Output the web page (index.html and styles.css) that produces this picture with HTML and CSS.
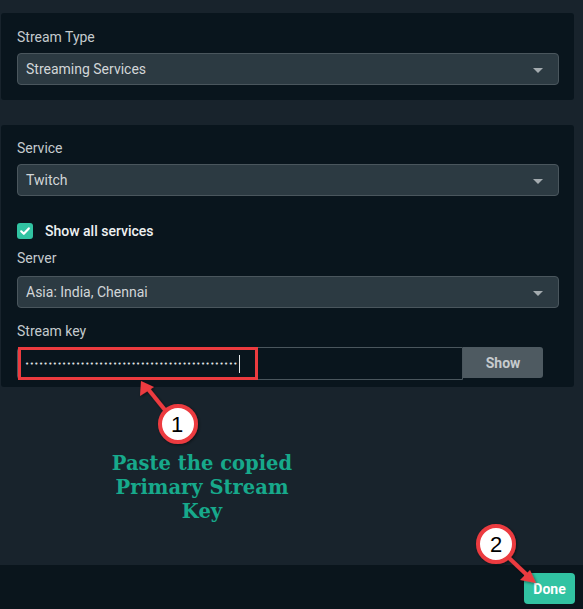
FILE: index.html
```html
<!DOCTYPE html>
<html lang="en">
  <head>
    <meta charset="UTF-8" />
    <title>Stream Settings</title>
    <link rel="stylesheet" href="styles.css">
  </head>
  <body>
    <div class="page">
      <div class="panel panel-type">
        <div class="label">Stream Type</div>
        <div class="select">Streaming Services<span class="caret"></span></div>
      </div>

      <div class="panel panel-service">
        <div class="label">Service</div>
        <div class="select">Twitch<span class="caret"></span></div>

        <div class="check-row">
          <span class="checkbox">
            <svg width="16" height="16" viewBox="0 0 16 16">
              <path d="M4.2 8.3 L6.8 10.8 L11.8 5.4" fill="none" stroke="#fff" stroke-width="2.2" stroke-linecap="round" stroke-linejoin="round" />
            </svg>
          </span>
          <span class="check-text">Show all services</span>
        </div>

        <div class="label label-server">Server</div>
        <div class="select">Asia: India, Chennai<span class="caret"></span></div>

        <div class="label label-key">Stream key</div>
        <div class="key-row">
          <div class="key-input"><span class="dots">••••••••••••••••••••••••••••••••••••••••••••••</span><span class="cursor"></span></div>
          <button class="show-btn">Show</button>
        </div>
      </div>

      <div class="spacer"></div>

      <div class="footer">
        <button class="done-btn">Done</button>
      </div>

      <svg class="notes" width="583" height="609" viewBox="0 0 583 609">
        <defs>
          <filter id="sh" x="-30%" y="-30%" width="160%" height="160%">
            <feDropShadow dx="1" dy="1" stdDeviation="1.5" flood-color="#000" flood-opacity="0.5" />
          </filter>
        </defs>
        <rect x="19.5" y="348.5" width="237" height="30" fill="none" stroke="#ec3b3f" stroke-width="3" />
        <g stroke="#ec3b3f" fill="#ec3b3f" filter="url(#sh)">
          <line x1="165" y1="410" x2="148" y2="389" stroke-width="4" />
          <polygon points="141,381 140,396 154,387" stroke="none" />
          <line x1="508" y1="557" x2="527" y2="575" stroke-width="4" />
          <polygon points="536,583 520,580 530,570" stroke="none" />
          <circle cx="178" cy="424" r="18" fill="#fff" stroke-width="4" />
          <circle cx="496" cy="544" r="18" fill="#fff" stroke-width="4" />
        </g>
        <text x="177" y="432" class="num">1</text>
        <text x="496" y="552" class="num">2</text>
      </svg>

      <div class="note-text">Paste the copied<br />Primary Stream<br />Key</div>
    </div>
  </body>
</html>
```

FILE: styles.css
```css
body {
  margin: 0;
  background-color: #18232c;
  font-family: Roboto, "Liberation Sans", sans-serif;
  font-size: 14px;
}
.page {
  position: relative;
  width: 583px;
  height: 609px;
  display: flex;
  flex-direction: column;
  overflow: hidden;
}
.panel {
  background-color: #09151d;
  margin-left: 1px;
  width: 573px;
  border-radius: 3px;
  box-sizing: border-box;
  padding: 0 16px;
}
.panel-type {
  margin-top: 13px;
  padding-top: 16px;
  padding-bottom: 15px;
}
.panel-service {
  margin-top: 25px;
  padding-top: 15px;
  padding-bottom: 7px;
}
.label {
  color: #c4cacd;
  line-height: 16px;
  margin-bottom: 8px;
}
.select {
  position: relative;
  width: 542px;
  height: 32px;
  box-sizing: border-box;
  border: 1px solid #4a565d;
  border-radius: 4px;
  background-color: #2c3a42;
  color: #d2d6d8;
  padding-left: 8px;
  line-height: 30px;
}
.caret {
  position: absolute;
  right: 15px;
  top: 14px;
  width: 0;
  height: 0;
  border-left: 5px solid transparent;
  border-right: 5px solid transparent;
  border-top: 5px solid #a4abaf;
}
.check-row {
  display: flex;
  align-items: center;
  margin-top: 27px;
  height: 16px;
}
.checkbox {
  width: 16px;
  height: 16px;
  border-radius: 3px;
  background-color: #31c3a2;
  display: flex;
}
.check-text {
  margin-left: 12px;
  color: #eef1f2;
  font-weight: 500;
}
.label-server {
  margin-top: 11px;
  margin-bottom: 10px;
}
.label-key {
  margin-top: 15px;
}
.key-row {
  display: flex;
  height: 33px;
}
.key-input {
  width: 446px;
  box-sizing: border-box;
  border: 1px solid #4a565d;
  border-radius: 4px 0 0 4px;
  background-color: #09151d;
  display: flex;
  align-items: center;
  padding-left: 7px;
}
.dots {
  color: #e2e5e6;
  font-size: 7px;
  letter-spacing: 0.5px;
  font-family: "DejaVu Sans", sans-serif;
}
.cursor {
  width: 1px;
  height: 18px;
  background-color: #e6e9ea;
  margin-left: 1px;
}
.show-btn {
  width: 80px;
  height: 31px;
  border: none;
  border-radius: 0 3px 3px 0;
  background-color: #4e5a61;
  color: #c6cbce;
  font-family: Roboto, "Liberation Sans", sans-serif;
  font-size: 14px;
  font-weight: 700;
  padding: 0;
}
.spacer {
  flex: 1;
}
.footer {
  height: 44px;
  background-color: #0a151c;
  display: flex;
  justify-content: flex-end;
  align-items: flex-start;
  padding-right: 8px;
}
.done-btn {
  margin-top: 8px;
  width: 51px;
  height: 31px;
  border: none;
  border-radius: 4px;
  background-color: #31c3a2;
  color: #ffffff;
  font-family: Roboto, "Liberation Sans", sans-serif;
  font-size: 14px;
  font-weight: 700;
  padding: 0;
}
.notes {
  position: absolute;
  left: 0;
  top: 0;
  pointer-events: none;
}
.num {
  font-family: "Liberation Sans", Arial, sans-serif;
  font-size: 22px;
  fill: #000;
  text-anchor: middle;
}
.note-text {
  position: absolute;
  left: 62px;
  top: 452px;
  width: 280px;
  text-align: center;
  color: #17a98b;
  font-family: "DejaVu Serif", serif;
  font-weight: 700;
  font-size: 19.5px;
  line-height: 24px;
}
```
